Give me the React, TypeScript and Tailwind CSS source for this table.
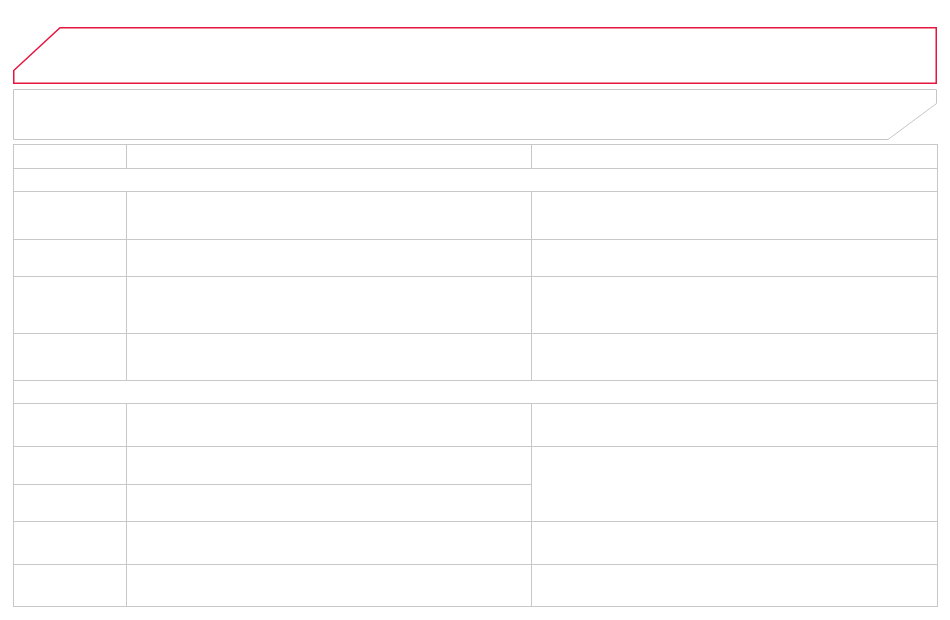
import { type FC } from 'react';

const Cell: FC<{ className?: string }> = ({ className = '' }) => (
  <div className={`bg-white ${className}`} />
);

const rows: { span?: boolean; merged?: 'start' | 'skip' }[] = [
  {},
  { span: true },
  {},
  {},
  {},
  {},
  { span: true },
  {},
  { merged: 'start' },
  { merged: 'skip' },
  {},
  {},
];

const App: FC = () => (
  <div className="w-[950px] h-[620px] bg-white pt-[27px] pl-[13px] font-['Liberation_Sans',sans-serif]">
    {/* title frame */}
    <div className="relative w-[924px] h-[57px]">
      <svg className="absolute inset-0" width="924" height="57" viewBox="0 0 924 57">
        <polygon
          points="0.75,43.5 47,0.75 923.25,0.75 923.25,56.25 0.75,56.25"
          fill="none"
          stroke="#e5173f"
          strokeWidth="1.5"
        />
      </svg>
    </div>

    {/* subtitle frame */}
    <div className="relative w-[925px] h-[51px] mt-[5px]">
      <svg className="absolute inset-0" width="925" height="51" viewBox="0 0 925 51">
        <polygon
          points="0.5,0.5 923.5,0.5 923.5,14.5 875,50.5 0.5,50.5"
          fill="none"
          stroke="#c6c6c6"
          strokeWidth="1"
        />
      </svg>
    </div>

    {/* table */}
    <div className="mt-[4px] w-[925px] grid grid-cols-[112px_404px_405px] grid-rows-[23px_22px_47px_36px_56px_46px_22px_42px_37px_36px_42px_41px] gap-px p-px bg-[#c8c8c8]">
      {rows.map((r, i) =>
        r.span ? (
          <Cell key={i} className="col-span-3" />
        ) : r.merged === 'start' ? (
          [
            <Cell key={`${i}a`} />,
            <Cell key={`${i}b`} />,
            <Cell key={`${i}c`} className="row-span-2" />,
          ]
        ) : r.merged === 'skip' ? (
          [<Cell key={`${i}a`} />, <Cell key={`${i}b`} />]
        ) : (
          [<Cell key={`${i}a`} />, <Cell key={`${i}b`} />, <Cell key={`${i}c`} />]
        )
      )}
    </div>
  </div>
);

export default App;
